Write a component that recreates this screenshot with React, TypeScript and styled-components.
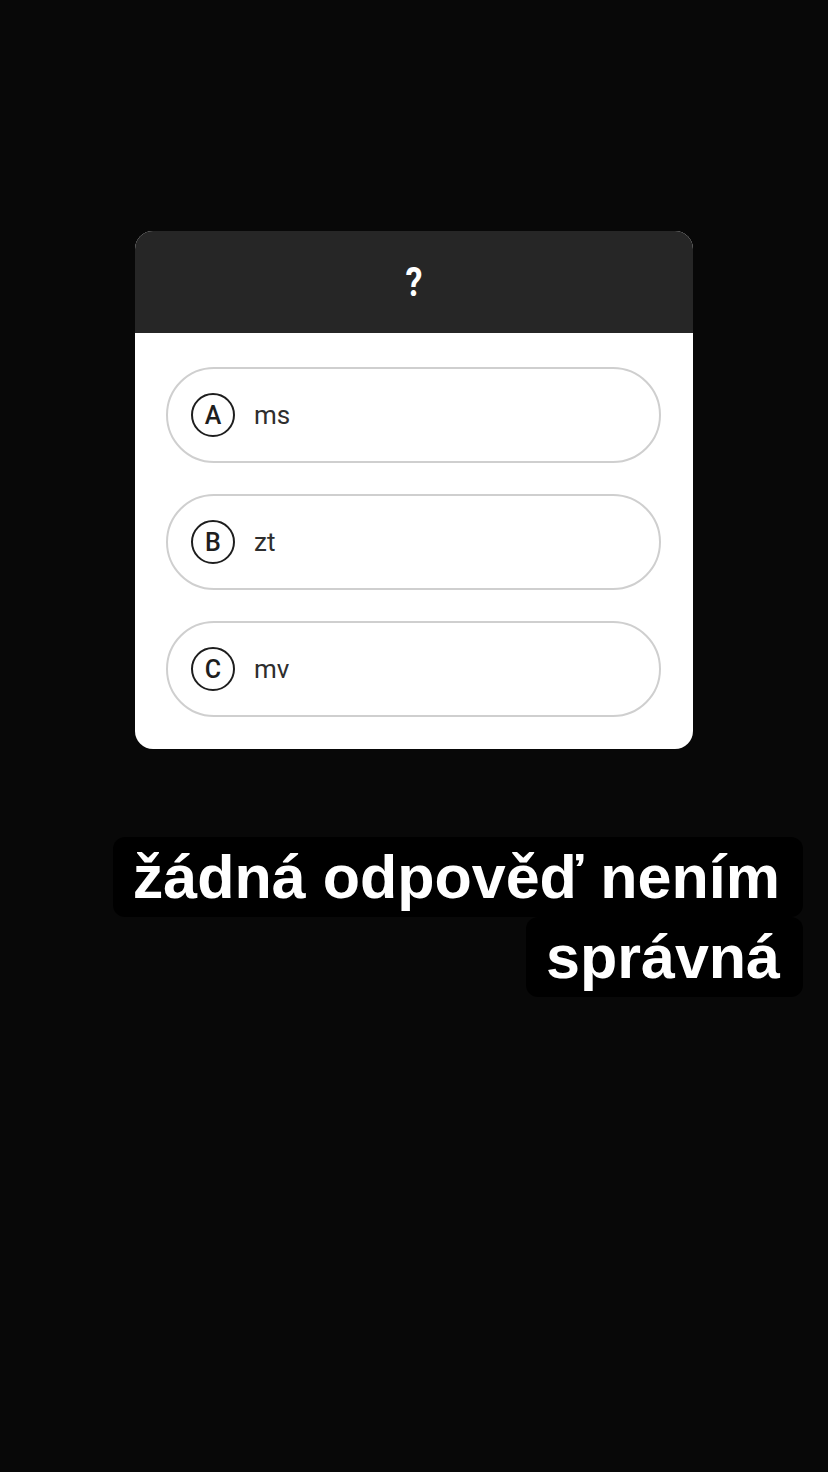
import React from "react";
import styled, { createGlobalStyle } from "styled-components";

const Global = createGlobalStyle`
  html, body { margin: 0; padding: 0; background: #080808; }
  #root { width: 828px; min-height: 1472px; }
`;

const Page = styled.div`
  width: 828px;
  height: 1472px;
  background: #080808;
  display: flex;
  flex-direction: column;
  align-items: flex-start;
  overflow: hidden;
`;

const Card = styled.div`
  margin: 231px 0 0 135px;
  width: 558px;
  border-radius: 18px;
  overflow: hidden;
  background: #ffffff;
  display: flex;
  flex-direction: column;
`;

const Header = styled.div`
  height: 102px;
  background: #262626;
  display: flex;
  align-items: center;
  justify-content: center;
`;

const Question = styled.span`
  display: inline-block;
  color: #ffffff;
  font-family: Roboto, "Liberation Sans", sans-serif;
  font-weight: 700;
  font-size: 40px;
  transform: scaleX(0.85);
`;

const Options = styled.div`
  display: flex;
  flex-direction: column;
  gap: 31px;
  padding: 34px 32px 32px 31px;
`;

const Option = styled.div`
  box-sizing: border-box;
  height: 96px;
  border: 2px solid #cfcfcf;
  border-radius: 48px;
  display: flex;
  align-items: center;
  padding-left: 23px;
  gap: 19px;
`;

const Badge = styled.div`
  box-sizing: border-box;
  width: 44px;
  height: 44px;
  border: 2.5px solid #1e1e1e;
  border-radius: 50%;
  display: flex;
  align-items: center;
  justify-content: center;
  font-family: Roboto, "Liberation Sans", sans-serif;
  font-weight: 500;
  font-size: 25px;
  color: #1e1e1e;
`;

const Label = styled.span`
  font-family: Roboto, "Liberation Sans", sans-serif;
  font-size: 26px;
  color: #2e2e2e;
`;

const Caption = styled.div`
  margin: 88px 0 0 0;
  width: 803px;
  text-align: right;
  font-family: "Liberation Sans", Arial, sans-serif;
  font-weight: 700;
  font-size: 61px;
  line-height: 80px;
  color: #ffffff;
`;

const CaptionText = styled.span`
  background: #000000;
  padding: 6px 23px 6px 20px;
  border-radius: 12px;
  -webkit-box-decoration-break: clone;
  box-decoration-break: clone;
`;

const options = [
  { letter: "A", text: "ms" },
  { letter: "B", text: "zt" },
  { letter: "C", text: "mv" },
];

export default function App() {
  return (
    <Page>
      <Global />
      <Card>
        <Header>
          <Question>?</Question>
        </Header>
        <Options>
          {options.map((o) => (
            <Option key={o.letter}>
              <Badge>{o.letter}</Badge>
              <Label>{o.text}</Label>
            </Option>
          ))}
        </Options>
      </Card>
      <Caption>
        <CaptionText>
          žádná odpověď nením
          <br />
          správná
        </CaptionText>
      </Caption>
    </Page>
  );
}
